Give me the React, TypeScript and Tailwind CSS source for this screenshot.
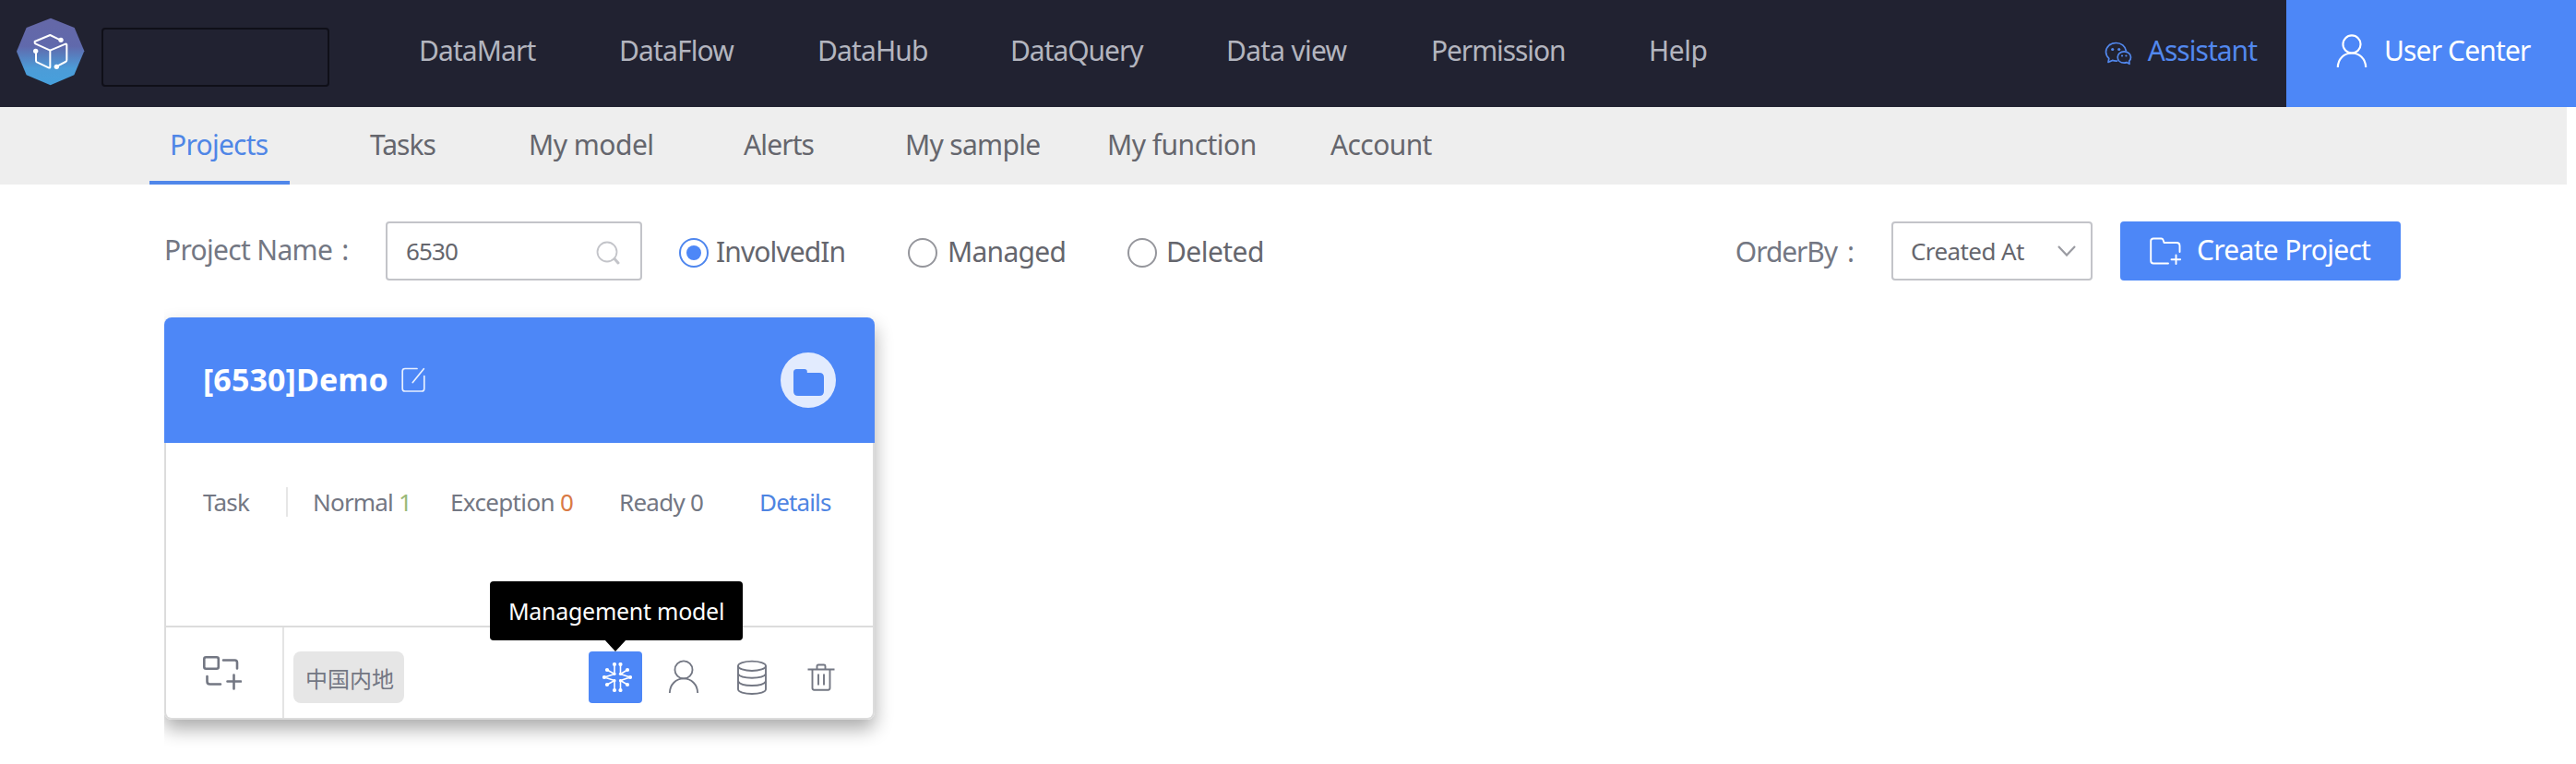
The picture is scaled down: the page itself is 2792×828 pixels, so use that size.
import type { ReactNode } from "react";
import clsx from "clsx";

const mainNav = [
  { label: "DataMart", cls: "w-[217px] tracking-[-0.9px]" },
  { label: "DataFlow", cls: "w-[215px] tracking-[-0.85px]" },
  { label: "DataHub", cls: "w-[209px] tracking-[-0.85px]" },
  { label: "DataQuery", cls: "w-[234px] tracking-[-1.05px]" },
  { label: "Data view", cls: "w-[222px] tracking-[-0.75px]" },
  { label: "Permission", cls: "w-[236px] tracking-[-1.1px]" },
  { label: "Help", cls: "tracking-[-0.5px]" },
];

const subNav = [
  { label: "Tasks", cls: "w-[172px] tracking-[-1px]" },
  { label: "My model", cls: "w-[233px] tracking-[-0.51px]" },
  { label: "Alerts", cls: "w-[175px] tracking-[-0.89px]" },
  { label: "My sample", cls: "w-[219px] tracking-[-0.69px]" },
  { label: "My function", cls: "w-[242px] tracking-[-0.51px]" },
  { label: "Account", cls: "tracking-[-0.6px]" },
];

function Logo() {
  return (
    <svg className="h-[74px] w-[74px]" viewBox="24 27 222 222" fill="none">
      <defs>
        <linearGradient id="logo" x1="0" y1="0" x2="0" y2="1">
          <stop offset="0.1" stopColor="#6468a8" />
          <stop offset="0.42" stopColor="#6069ac" />
          <stop offset="0.75" stopColor="#4c9cd8" />
          <stop offset="1" stopColor="#46a0dc" />
        </linearGradient>
      </defs>
      <path fill="url(#logo)" d="M135 29L212 60L244 136L211 214L134 247L56 214L24 137L56 60Z" />
      <g stroke="#fff" strokeWidth="6" strokeLinejoin="round" strokeLinecap="round">
        <path d="M160 97L133 84L83 105Q82 110 85 112L133 134L183 113Q187 112 187 116V165Q187 169 183 171L158 184" />
        <path d="M133 134V188Q133 192 128 190L90 172Q87 170 87 167V138" />
      </g>
      <circle cx="168" cy="100" r="8" fill="#fff" />
      <circle cx="86" cy="136" r="8" fill="#fff" />
      <circle cx="154" cy="187" r="8" fill="#fff" />
    </svg>
  );
}

function ChatIcon() {
  return (
    <svg className="h-[26px] w-[30px]" viewBox="0 0 30 26" fill="none" stroke="currentColor" strokeWidth="1.7" strokeLinejoin="round">
      <path d="M23.5 10.5C22.6 5 18 1.5 12.5 1.5C6.3 1.5 1.5 5.8 1.5 11.3C1.5 14.3 2.8 16.6 4.8 18.4L4 22.5L8.5 20.4C10.4 21 12.4 21.2 14.3 21" />
      <path d="M21.2 10.8C17.2 10.8 14.2 13.5 14.2 17C14.2 20.6 17.2 23.1 21.2 23.1C22.2 23.1 23.1 22.9 24 22.6L27 24.3L26.7 21.2C28 20.1 28.5 18.6 28.5 17C28.5 13.5 25.2 10.8 21.2 10.8Z" />
      <g fill="currentColor" stroke="none">
        <circle cx="8.7" cy="8.5" r="1.6" />
        <circle cx="15.7" cy="8.5" r="1.6" />
        <circle cx="19" cy="15.5" r="1.1" />
        <circle cx="23.4" cy="15.5" r="1.1" />
      </g>
    </svg>
  );
}

function UserIcon({ className, width = 2 }: { className?: string; width?: number }) {
  return (
    <svg className={className} viewBox="0 0 34 38" fill="none" stroke="currentColor" strokeWidth={width}>
      <circle cx="17" cy="11.2" r="9.8" />
      <path d="M1.4 37C1.6 27.5 8.6 21 17 21S32.4 27.5 32.6 37" />
    </svg>
  );
}

function Radio({ label, checked, cls }: { label: string; checked?: boolean; cls: string }) {
  return (
    <label className={clsx("flex items-center pt-1 text-[#65666d]", cls)}>
      <span
        className={clsx(
          "flex h-8 w-8 shrink-0 items-center justify-center rounded-full border-2",
          checked ? "border-[#4e86ee]" : "border-[#95969c]",
        )}
      >
        {checked && <span className="h-4 w-4 rounded-full bg-[#4d87f7]" />}
      </span>
      <span className="pb-[3px]">{label}</span>
    </label>
  );
}

function Snowflake() {
  const ends = [[13, 2], [19.5, 2], [5, 8], [27, 8], [2, 16], [30, 16], [5, 24], [27, 24], [13, 30], [19.5, 30]];
  return (
    <svg className="ml-[3px] h-[32px] w-[32px]" viewBox="0 0 32 32" fill="none" stroke="#fff" strokeWidth="1.6">
      <path d="M13 2V12.5L5 8M19.5 2V12.5L27 8M13 30V19.5L5 24M19.5 30V19.5L27 24M2 16L13 12.5M2 16L13 19.5M30 16L19.5 12.5M30 16L19.5 19.5" />
      <g fill="#fff" stroke="none">
        {ends.map(([x, y]) => (
          <circle key={`${x}-${y}`} cx={x} cy={y} r="2.1" />
        ))}
        <circle cx="13" cy="12.3" r="1.6" />
        <circle cx="19.5" cy="12.3" r="1.6" />
        <circle cx="13" cy="19.7" r="1.6" />
        <circle cx="19.5" cy="19.7" r="1.6" />
      </g>
    </svg>
  );
}

function Stat({ children, cls }: { children: ReactNode; cls: string }) {
  return <div className={clsx("shrink-0", cls)}>{children}</div>;
}

function ProjectCard() {
  return (
    <section className="h-[436px] w-[770px] [clip-path:inset(-40px_-40px_-48px_0)]">
      <div className="flex h-full flex-col rounded-lg shadow-[0_10px_20px_rgba(0,0,0,0.33)]">
        <header className="flex h-[136px] items-center rounded-t-lg bg-[#4d87f7] pr-[42px] pl-[42px] text-white">
          <h2 className="pb-[3px] text-[34px] font-bold tracking-[0.1px]">[6530]Demo</h2>
          <svg className="ml-[14px] h-7 w-[26px]" viewBox="0 0 26 28" fill="none" stroke="#e8f0ff" strokeWidth="1.7" strokeLinecap="round">
            <path d="M17 1.5H4Q1.2 1.5 1.2 4.3V23.2Q1.2 26 4 26H22Q24.8 26 24.8 23.2V9.5M12.3 16.5L24.3 1.7" />
          </svg>
          <span className="ml-auto flex h-[60px] w-[60px] items-center justify-center rounded-full bg-[#e2ebfe]">
            <svg className="mt-[5px] h-[29px] w-[33px]" viewBox="0 0 33 29" fill="#4d87f7">
              <path d="M3.5 0H12Q14.8 0 14.8 2.6V4H28Q33 4 33 9V24Q33 29 28 29H5Q0 29 0 24V3.5Q0 0 3.5 0Z" />
            </svg>
          </span>
        </header>
        <div className="flex flex-1 flex-col rounded-b-lg border-2 border-t-0 border-[#dcdcdc] bg-white text-[26px] text-[#737783]">
          <div className="h-[198px] pt-12">
            <div className="flex h-8 items-center pl-10">
              <Stat cls="w-[90px] tracking-[-0.8px]">Task</Stat>
              <span className="h-8 w-0.5 bg-[#e6e6e6]" />
              <Stat cls="ml-[27px] w-[149px] tracking-[-0.8px]">
                Normal <span className="text-[#9ab978]">1</span>
              </Stat>
              <Stat cls="w-[183px] tracking-[-0.64px]">
                Exception <span className="text-[#d97a45]">0</span>
              </Stat>
              <Stat cls="w-[152px] tracking-[-0.74px]">Ready 0</Stat>
              <a className="tracking-[-0.84px] text-[#4e84e2]">Details</a>
            </div>
          </div>
          <footer className="flex flex-1 items-center border-t-2 border-[#dcdcdc]">
            <div className="flex h-full w-[128px] items-center border-r-2 border-[#e4e4e4] pl-10">
              <svg className="h-[38px] w-[42px]" viewBox="0 0 42 38" fill="none" stroke="currentColor" strokeWidth="2.6" strokeLinecap="round" strokeLinejoin="round">
                <rect x="1.3" y="2.3" width="15.5" height="12.5" rx="2" />
                <path d="M22 5.5H34.5Q37 5.5 37 8V14.5M4.5 23V28.5Q4.5 31.5 7.5 31.5H19M26.5 28.5H41M33.5 21.5V36.5" />
              </svg>
            </div>
            <span className="mt-[10px] ml-[10px] flex h-14 w-[120px] items-center justify-center rounded-lg bg-[#e6e6e6] pt-[2px] pl-[2px] font-['Noto_Sans_CJK_SC',sans-serif] text-[24px] leading-none">
              中国内地
            </span>
            <div className="relative mt-[10px] ml-[200px] flex h-14 w-[58px] items-center justify-center rounded bg-[#4d87f7]">
              <Snowflake />
              <div className="absolute bottom-[68px] left-[-107px] flex h-16 w-[274px] items-center justify-center rounded bg-black text-[25px] tracking-[-0.27px] whitespace-nowrap text-white">
                Management model
                <svg className="absolute top-[63px] left-[124px] h-[13px] w-6" viewBox="0 0 24 13">
                  <path d="M0 0H24L12 13Z" fill="#000" />
                </svg>
              </div>
            </div>
            <UserIcon className="mt-2 ml-[28px] h-[37px] w-[34px] shrink-0" width={1.9} />
            <svg className="mt-[9px] ml-[41px] h-[38px] w-8 shrink-0" viewBox="0 0 32 38" fill="none" stroke="currentColor" strokeWidth="1.9">
              <ellipse cx="16" cy="6.8" rx="15" ry="5.2" />
              <path d="M1 6.8V32C1 34.9 7.7 37 16 37S31 34.9 31 32V6.8" />
              <path d="M1 15.5C2.5 18 8.5 19.7 16 19.7S29.5 18 31 15.5M1 23.5C2.5 26.4 8.5 28 16 28S29.5 26.4 31 23.5" />
            </svg>
            <svg className="mt-[9px] ml-[44px] h-[30px] w-[30px] shrink-0" viewBox="0 0 30 30" fill="none" stroke="currentColor" strokeWidth="1.9">
              <path d="M0.5 6.5H29.5M10.5 6V3Q10.5 1.5 12 1.5H18Q19.5 1.5 19.5 3V6M5.5 6.5V26.5Q5.5 28.7 7.5 28.7H22.5Q24.5 28.7 24.5 26.5V6.5M12 11.5V23.5M18 11.5V23.5" />
            </svg>
          </footer>
        </div>
      </div>
    </section>
  );
}

export default function App() {
  return (
    <div className="h-[828px] w-[2792px] overflow-hidden bg-white font-['Noto_Sans','Noto_Sans_CJK_SC',sans-serif] text-[30px] leading-none whitespace-nowrap">
      <header className="flex h-[116px] items-center bg-[#212231]">
        <div className="pr-[18px] pb-1 pl-[18px]">
          <Logo />
        </div>
        <div className="mt-[7px] h-[64px] w-[247px] rounded-sm border-2 border-[#0f0f18]" />
        <nav className="ml-[97px] flex pb-[6px] text-[#b3b5bf]">
          {mainNav.map((n) => (
            <a key={n.label} className={clsx("shrink-0", n.cls)}>
              {n.label}
            </a>
          ))}
        </nav>
        <div className="ml-auto flex items-center pr-8 text-[#5288ee]">
          <ChatIcon />
          <span className="ml-[17px] pb-[6px] tracking-[-0.98px]">Assistant</span>
        </div>
        <div className="flex h-full w-[314px] items-center bg-[#4d87f7] pl-[54px] text-white">
          <UserIcon className="mb-[5px] h-[37px] w-[34px]" width={2.2} />
          <span className="ml-[18px] pb-[6px] tracking-[-0.86px]">User Center</span>
        </div>
      </header>

      <nav className="flex h-[84px] w-[2782px] bg-[#eeeeee] pl-[162px] text-[#65666d]">
        <a className="mr-[87px] flex w-[152px] items-center border-b-4 border-[#5087ea] pt-[2px] pl-[22px] tracking-[-0.73px] text-[#4f86e6]">
          Projects
        </a>
        {subNav.map((n) => (
          <a key={n.label} className={clsx("flex shrink-0 items-center pb-[2px]", n.cls)}>
            {n.label}
          </a>
        ))}
      </nav>

      <main className="pl-[178px]">
        <div className="mt-10 flex h-16 w-[2424px] items-center">
          <div className="flex w-[240px] shrink-0 items-center pb-[2px] text-[#737783]">
            <span className="tracking-[-0.68px]">Project Name</span>
            <span className="ml-[10px]">:</span>
          </div>
          <div className="flex h-16 w-[278px] shrink-0 items-center justify-between rounded border-2 border-[#c3c4c9] pr-[22px] pl-5 text-[26px] text-[#65666d]">
            <span className="tracking-[-0.87px]">6530</span>
            <svg className="mt-1 h-[26px] w-[26px]" viewBox="0 0 26 26" fill="none" stroke="#c3c4c9" strokeLinecap="round">
              <circle cx="12" cy="12" r="10.5" strokeWidth="1.8" />
              <path d="M20 19.5L24 24" strokeWidth="3" />
            </svg>
          </div>
          <Radio label="InvolvedIn" checked cls="ml-10 w-[248px] gap-2 tracking-[-0.89px]" />
          <Radio label="Managed" cls="w-[238px] gap-[11px] tracking-[-0.71px]" />
          <Radio label="Deleted" cls="gap-[10px] tracking-[-0.54px]" />
          <div className="ml-auto flex items-center pt-px text-[#737783]">
            <span className="tracking-[-1.1px]">OrderBy</span>
            <span className="mr-[40px] ml-[11px]">:</span>
          </div>
          <div className="flex h-16 w-[218px] items-center justify-between rounded border-2 border-[#c3c4c9] pr-4 pl-[19px] text-[26px] text-[#65666d]">
            <span className="tracking-[-0.59px]">Created At</span>
            <svg className="h-3 w-5" viewBox="0 0 20 12" fill="none" stroke="#9a9ba2" strokeWidth="2.2">
              <path d="M1 1L10 10.5L19 1" />
            </svg>
          </div>
          <button className="ml-[30px] flex h-16 w-[304px] items-center rounded bg-[#4d87f7] pl-8 text-white">
            <svg className="h-[30px] w-[34px]" viewBox="0 0 34 30" fill="none" stroke="currentColor" strokeWidth="1.9" strokeLinecap="round" strokeLinejoin="round">
              <path d="M20 28.5H4Q1.2 28.5 1.2 25.5V4Q1.2 1.5 4 1.5H12.5Q14 1.5 14.5 3L15.5 6H29Q32.5 6 32.5 9.5V16M28.5 19.5V29M23.5 24.2H33.2" />
            </svg>
            <span className="ml-[17px] pb-[2px] tracking-[-0.7px]">Create Project</span>
          </button>
        </div>
        <div className="mt-10">
          <ProjectCard />
        </div>
      </main>
    </div>
  );
}
